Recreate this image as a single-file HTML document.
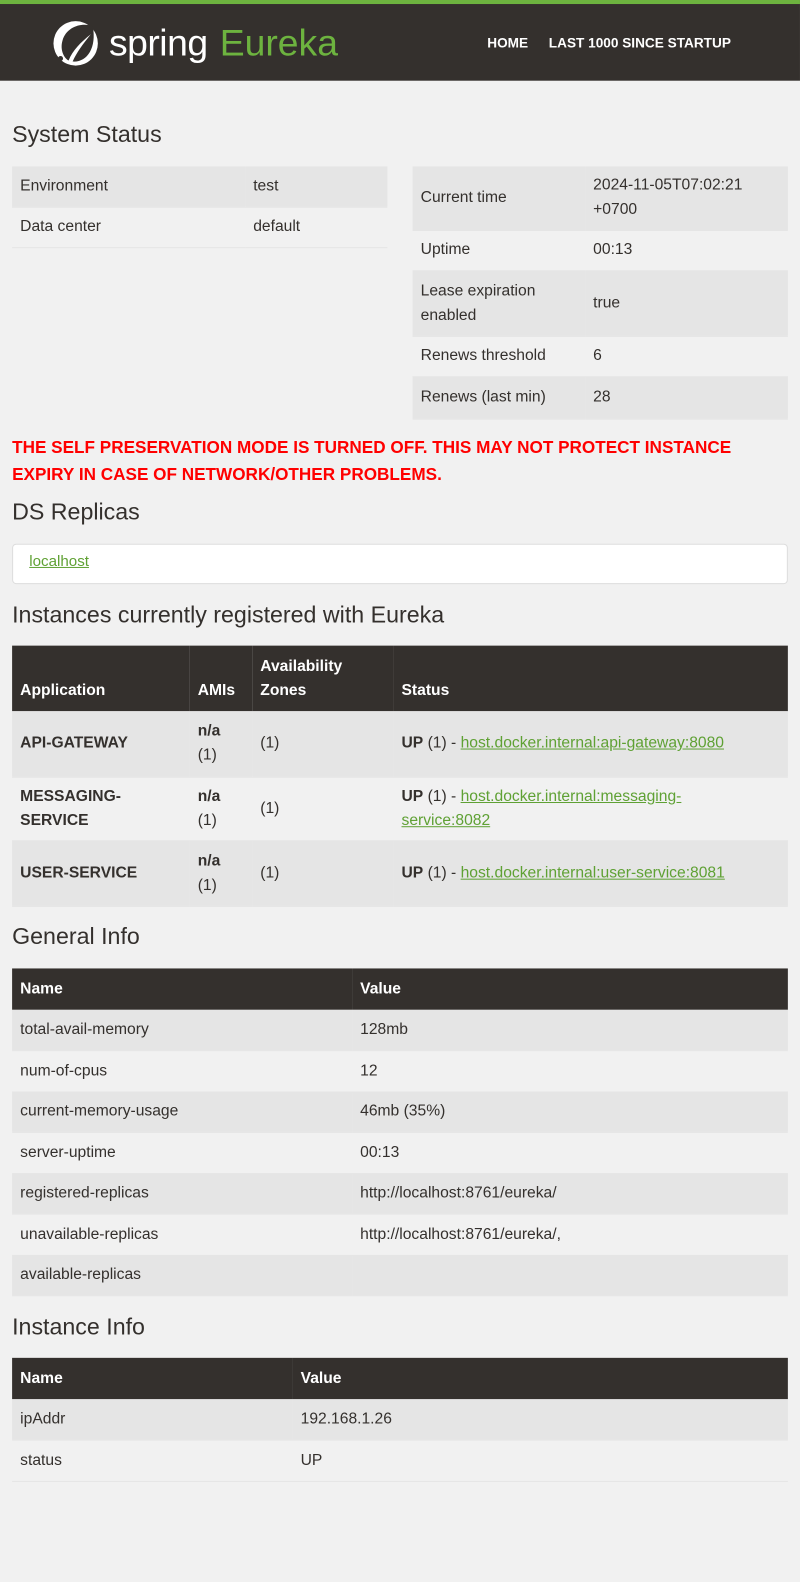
<!DOCTYPE html>
<html><head><meta charset="utf-8"><style>
*{box-sizing:border-box;margin:0;padding:0}
body{width:800px;height:1582px;background:#f1f1f1;font-family:"Liberation Sans",sans-serif;font-size:15px;color:#34302d;position:relative;overflow:hidden}
#w{position:absolute;left:0;top:0;width:793px;height:1568px;transform:scale(1.0088);transform-origin:0 0}
.top{position:absolute;left:0;top:0;width:793px;height:80px;background:#34302d;border-top:4px solid #6db33f}
.logo{position:absolute;left:52px;top:14px;height:50px;display:flex;align-items:center}
.logo .s{color:#fff;font-size:37px;margin-left:10px;letter-spacing:-0.5px}
.logo .e{color:#6db33f;font-size:37px;margin-left:12px}
.nav{position:absolute;top:31px;color:#fff;font-weight:bold;font-size:13.5px}
h2{position:absolute;left:12px;font-size:23px;font-weight:normal;color:#34302d}
table{position:absolute;border-collapse:collapse}
td,th{padding:0 8px;text-align:left;vertical-align:middle;line-height:24px;font-size:15.5px}
tr.o td{background:#e5e5e5}
tr td{border-bottom:1px solid #e5e5e5}
th{background:#34302d;color:#fff;font-weight:bold;vertical-align:bottom;padding-bottom:8px}
a{color:#5fa134;text-decoration:underline}
.red{position:absolute;left:12px;top:430px;color:#f00;font-size:17px;line-height:27px;width:780px;font-weight:bold}
.box{position:absolute;left:12px;top:539px;width:769px;height:40px;background:#fff;border:1px solid #ddd;border-radius:4px;padding:8px 16px}
</style></head><body><div id="w">
<div class="top">
<div class="logo"><svg width="46" height="46" viewBox="0 0 46 46"><circle cx="23" cy="23" r="22" fill="#fff"/><path d="M40 6 C30 2 14 6 10 20 C7 30 12 38 16 40 C20 30 28 22 38 14 C30 24 24 32 20 41 C34 42 44 28 40 6Z" fill="#34302d"/><circle cx="8" cy="38" r="2.5" fill="#34302d"/></svg><span class="s">spring</span><span class="e">Eureka</span></div>
<div class="nav" style="left:483px">HOME</div>
<div class="nav" style="left:544px">LAST 1000 SINCE STARTUP</div>
</div>

<h2 style="top:120px">System Status</h2>
<table style="left:12px;top:165px;width:372px">
<tr class="o" style="height:40px"><td style="width:231px">Environment</td><td>test</td></tr>
<tr style="height:40px"><td>Data center</td><td>default</td></tr>
</table>
<table style="left:409px;top:165px;width:372px">
<tr class="o" style="height:63px"><td style="width:171px">Current time</td><td>2024-11-05T07:02:21<br>+0700</td></tr>
<tr style="height:40px"><td>Uptime</td><td>00:13</td></tr>
<tr class="o" style="height:65px"><td>Lease expiration<br>enabled</td><td>true</td></tr>
<tr style="height:40px"><td>Renews threshold</td><td>6</td></tr>
<tr class="o" style="height:42px"><td>Renews (last min)</td><td>28</td></tr>
</table>

<div class="red">THE SELF PRESERVATION MODE IS TURNED OFF. THIS MAY NOT PROTECT INSTANCE<br>EXPIRY IN CASE OF NETWORK/OTHER PROBLEMS.</div>

<h2 style="top:494px">DS Replicas</h2>
<div class="box"><a>localhost</a></div>

<h2 style="top:596px">Instances currently registered with Eureka</h2>
<table style="left:12px;top:640px;width:769px">
<tr style="height:65px"><th style="width:176px">Application</th><th style="width:62px">AMIs</th><th style="width:140px">Availability<br>Zones</th><th>Status</th></tr>
<tr class="o" style="height:65px"><td><b>API-GATEWAY</b></td><td><b>n/a</b><br>(1)</td><td>(1)</td><td><b>UP</b> (1) - <a>host.docker.internal:api-gateway:8080</a></td></tr>
<tr style="height:63px"><td><b>MESSAGING-<br>SERVICE</b></td><td><b>n/a</b><br>(1)</td><td>(1)</td><td><b>UP</b> (1) - <a>host.docker.internal:messaging-<br>service:8082</a></td></tr>
<tr class="o" style="height:65px"><td><b>USER-SERVICE</b></td><td><b>n/a</b><br>(1)</td><td>(1)</td><td><b>UP</b> (1) - <a>host.docker.internal:user-service:8081</a></td></tr>
</table>

<h2 style="top:915px">General Info</h2>
<table style="left:12px;top:960px;width:769px">
<tr style="height:41px"><th style="width:337px">Name</th><th>Value</th></tr>
<tr class="o" style="height:40px"><td>total-avail-memory</td><td>128mb</td></tr>
<tr style="height:41px"><td>num-of-cpus</td><td>12</td></tr>
<tr class="o" style="height:40px"><td>current-memory-usage</td><td>46mb (35%)</td></tr>
<tr style="height:41px"><td>server-uptime</td><td>00:13</td></tr>
<tr class="o" style="height:40px"><td>registered-replicas</td><td>http://localhost:8761/eureka/</td></tr>
<tr style="height:41px"><td>unavailable-replicas</td><td>http://localhost:8761/eureka/,</td></tr>
<tr class="o" style="height:40px"><td>available-replicas</td><td></td></tr>
</table>

<h2 style="top:1302px">Instance Info</h2>
<table style="left:12px;top:1346px;width:769px">
<tr style="height:41px"><th style="width:278px">Name</th><th>Value</th></tr>
<tr class="o" style="height:40px"><td>ipAddr</td><td>192.168.1.26</td></tr>
<tr style="height:41px"><td>status</td><td>UP</td></tr>
</table>
</div></body></html>
